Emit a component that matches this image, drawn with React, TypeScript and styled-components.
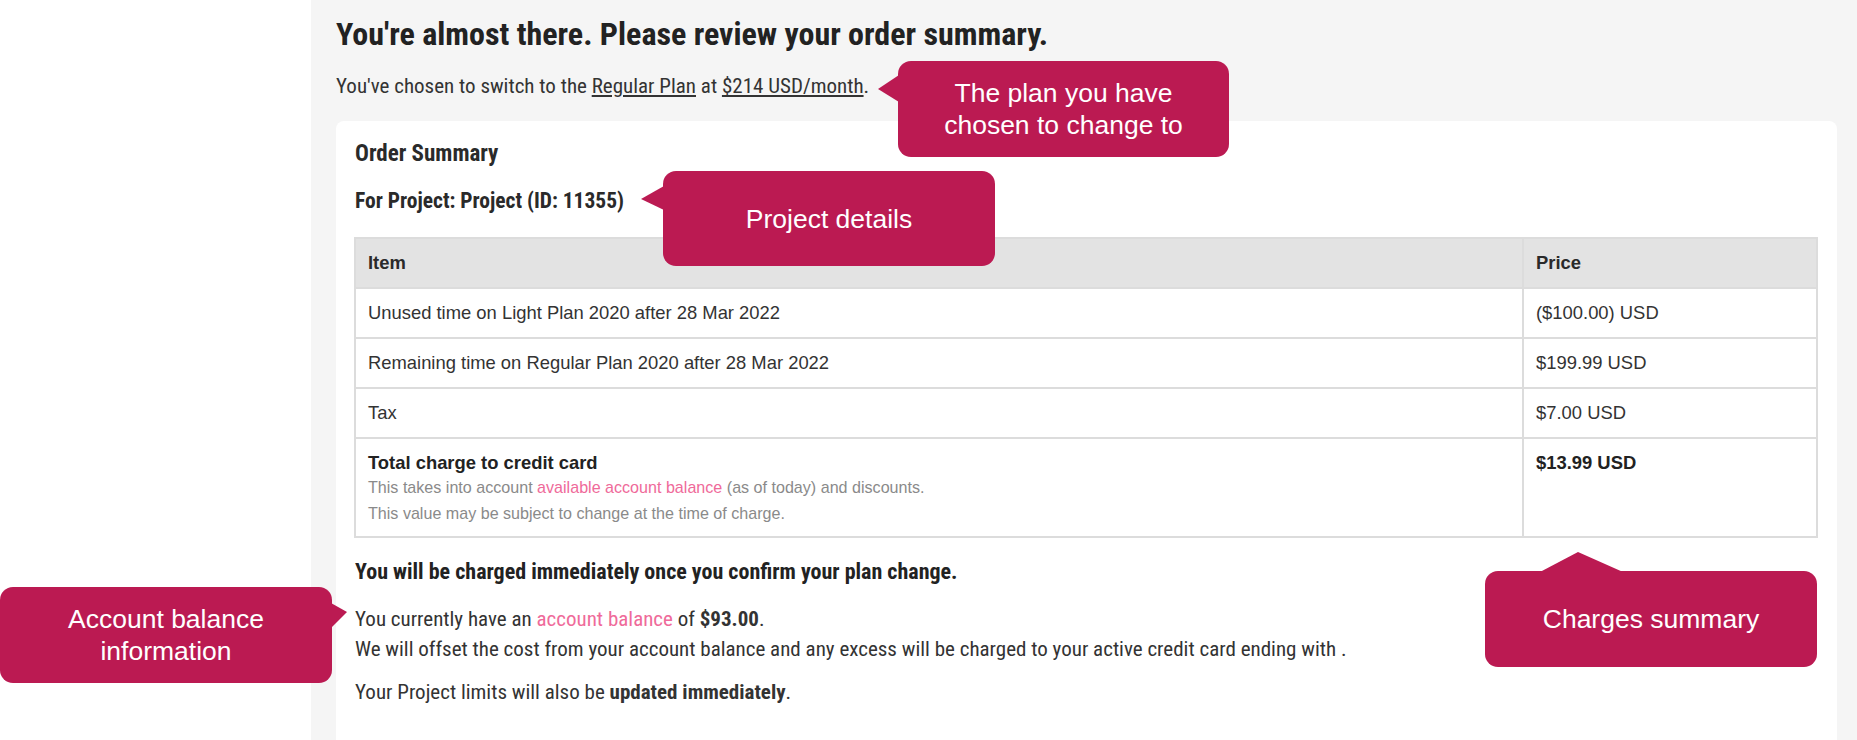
import React from 'react'
import styled, { createGlobalStyle, css } from 'styled-components'

const narrow = `"Roboto Condensed", Roboto, "Liberation Sans", sans-serif`

const GlobalStyle = createGlobalStyle`
	html, body {
		margin: 0;
		padding: 0;
	}
	body {
		font-family: "Liberation Sans", Arial, sans-serif;
		color: #333;
		background: #fff;
	}
`

const Page = styled.div`
	position: relative;
	display: flex;
	width: 1857px;
	height: 740px;
	overflow: hidden;
`

const Gutter = styled.div`
	flex: none;
	width: 311px;
	background: #fff;
`

const Main = styled.main`
	flex: 1;
	display: flex;
	flex-direction: column;
	background: #f5f5f5;
	padding: 16px 20px 0 25px;
`

const Heading = styled.h1`
	margin: 0;
	font-family: ${narrow};
	font-stretch: condensed;
	font-size: 32px;
	line-height: 36px;
	font-weight: 700;
	color: #222;
`

const Chosen = styled.p`
	margin: 21px 0 0;
	font-family: ${narrow};
	font-stretch: condensed;
	font-size: 21px;
	line-height: 26px;
	color: #333;
`

const Plain = styled.span`
	color: #333;
	text-decoration: underline;
`

const Card = styled.section`
	margin-top: 22px;
	min-height: 700px;
	background: #fff;
	border-radius: 8px;
	padding: 19px 19px 0 18px;
`

const CardTitle = styled.h2`
	margin: 0 0 0 1px;
	font-family: ${narrow};
	font-stretch: condensed;
	font-size: 23px;
	line-height: 28px;
	font-weight: 700;
	color: #2a2a2a;
`

const ProjectLine = styled.h3`
	margin: 20px 0 0 1px;
	font-family: ${narrow};
	font-stretch: condensed;
	font-size: 21.5px;
	line-height: 26px;
	font-weight: 700;
	color: #2a2a2a;
`

const Table = styled.table`
	margin-top: 23px;
	width: 100%;
	border-collapse: collapse;
	border: 2px solid #dcdcdc;
	font-size: 18.4px;
	color: #333;
`

const Th = styled.th`
	height: 48px;
	padding: 0 12px;
	background: #e3e3e3;
	border: 2px solid #dcdcdc;
	text-align: left;
	font-weight: 700;
	color: #2a2a2a;
`

const Td = styled.td<{ $top?: boolean }>`
	height: 48px;
	padding: 0 12px;
	border: 2px solid #dcdcdc;
	vertical-align: middle;
	${({ $top }) =>
		$top &&
		css`
			vertical-align: top;
			padding-top: 13px;
			padding-bottom: 10px;
		`}
`

const Strong = styled.div`
	font-weight: 700;
	line-height: 22px;
	color: #222;
`

const Hint = styled.div`
	font-size: 16.1px;
	line-height: 26px;
	color: #8a8a8a;
`

const Pink = styled.span`
	color: #ef6a9a;
`

const Note = styled.p<{ $gap: number; $bold?: boolean }>`
	margin: ${({ $gap }) => $gap}px 0 0 1px;
	font-family: ${narrow};
	font-stretch: condensed;
	font-size: ${({ $bold }) => ($bold ? 22 : 21)}px;
	line-height: ${({ $bold }) => ($bold ? 26 : 30)}px;
	font-weight: ${({ $bold }) => ($bold ? 700 : 400)};
	color: ${({ $bold }) => ($bold ? '#222' : '#333')};
`

type Side = 'left' | 'right' | 'up'

const Callout = styled.div<{
	$x: number
	$y: number
	$w: number
	$h: number
	$side: Side
	$a: number
	$b: number
	$tip: number
	$out: number
}>`
	position: absolute;
	left: ${({ $x }) => $x}px;
	top: ${({ $y }) => $y}px;
	width: ${({ $w }) => $w}px;
	height: ${({ $h }) => $h}px;
	display: flex;
	align-items: center;
	justify-content: center;
	text-align: center;
	background: #bb1a52;
	border-radius: 13px;
	color: #fff;
	font-family: "Liberation Sans", Arial, sans-serif;
	font-size: 26.5px;
	line-height: 32px;

	&::before {
		content: '';
		position: absolute;
		background: #bb1a52;
		${({ $side, $a, $b, $tip, $out }) => {
			const pct = ((($tip - $a) / ($b - $a)) * 100).toFixed(1)
			if ($side === 'left')
				return css`
					left: -${$out}px;
					top: ${$a}px;
					width: ${$out + 1}px;
					height: ${$b - $a}px;
					clip-path: polygon(100% 0, 0 ${pct}%, 100% 100%);
				`
			if ($side === 'right')
				return css`
					right: -${$out}px;
					top: ${$a}px;
					width: ${$out + 1}px;
					height: ${$b - $a}px;
					clip-path: polygon(0 0, 100% ${pct}%, 0 100%);
				`
			return css`
				top: -${$out}px;
				left: ${$a}px;
				height: ${$out + 1}px;
				width: ${$b - $a}px;
				clip-path: polygon(0 100%, ${pct}% 0, 100% 100%);
			`
		}}
	}
`

const rows = [
	{ item: 'Unused time on Light Plan 2020 after 28 Mar 2022', price: '($100.00) USD' },
	{ item: 'Remaining time on Regular Plan 2020 after 28 Mar 2022', price: '$199.99 USD' },
	{ item: 'Tax', price: '$7.00 USD' },
]

export default function App() {
	return (
		<>
			<GlobalStyle />
			<Page>
				<Gutter />
				<Main>
					<Heading>You're almost there. Please review your order summary.</Heading>
					<Chosen>
						You've chosen to switch to the <Plain>Regular Plan</Plain> at <Plain>$214 USD/month</Plain>.
					</Chosen>
					<Card>
						<CardTitle>Order Summary</CardTitle>
						<ProjectLine>For Project: Project (ID: 11355)</ProjectLine>
						<Table>
							<colgroup>
								<col />
								<col style={{ width: 294 }} />
							</colgroup>
							<thead>
								<tr>
									<Th>Item</Th>
									<Th>Price</Th>
								</tr>
							</thead>
							<tbody>
								{rows.map((r) => (
									<tr key={r.item}>
										<Td>{r.item}</Td>
										<Td>{r.price}</Td>
									</tr>
								))}
								<tr>
									<Td $top>
										<Strong>Total charge to credit card</Strong>
										<Hint>
											This takes into account <Pink>available account balance</Pink> (as of today) and discounts.
										</Hint>
										<Hint>This value may be subject to change at the time of charge.</Hint>
									</Td>
									<Td $top>
										<Strong>$13.99 USD</Strong>
									</Td>
								</tr>
							</tbody>
						</Table>
						<Note $gap={21} $bold>
							You will be charged immediately once you confirm your plan change.
						</Note>
						<Note $gap={19}>
							You currently have an <Pink>account balance</Pink> of <b>$93.00</b>.
							<br />
							We will offset the cost from your account balance and any excess will be charged to your active
							credit card ending with .
						</Note>
						<Note $gap={13}>
							Your Project limits will also be <b>updated immediately</b>.
						</Note>
					</Card>
				</Main>

				<Callout $x={898} $y={61} $w={331} $h={96} $side="left" $a={14} $b={41} $tip={28} $out={20}>
					The plan you have
					<br />
					chosen to change to
				</Callout>
				<Callout $x={663} $y={171} $w={332} $h={95} $side="left" $a={15} $b={39} $tip={28} $out={22}>
					Project details
				</Callout>
				<Callout $x={0} $y={587} $w={332} $h={96} $side="right" $a={16} $b={41} $tip={25} $out={15}>
					Account balance
					<br />
					information
				</Callout>
				<Callout $x={1485} $y={571} $w={332} $h={96} $side="up" $a={55} $b={138} $tip={93} $out={19}>
					Charges summary
				</Callout>
			</Page>
		</>
	)
}
